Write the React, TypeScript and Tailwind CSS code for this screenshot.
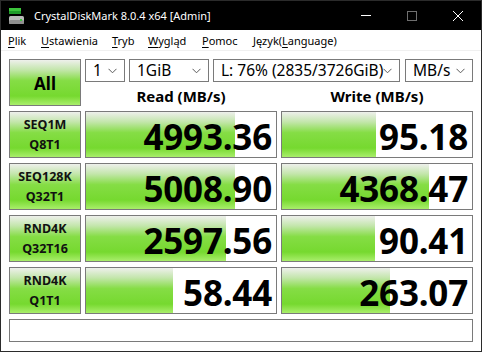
import React from 'react';

const green =
  'bg-[linear-gradient(to_bottom,#eef0ec_0%,#c3e6ab_22%,#85dd45_46%,#76d92f_80%,#a9ee6b_100%)]';

const Chevron: React.FC = () => (
  <svg width="9" height="6" viewBox="0 0 9 6" className="shrink-0">
    <polyline points="0.5,0.8 4.5,4.8 8.5,0.8" fill="none" stroke="#5a5a5a" strokeWidth="1" />
  </svg>
);

const Combo: React.FC<{ text: string; w: string }> = ({ text, w }) => (
  <div className={`${w} h-[23px] bg-white border border-[#7a7a7a] flex items-center justify-between pl-[7px] pr-[7px]`}>
    <span className="text-[15.5px] leading-[21px] text-black whitespace-nowrap">{text}</span>
    <Chevron />
  </div>
);

const Result: React.FC<{ value: string; bar: number }> = ({ value, bar }) => (
  <div className="relative h-[47px] border border-[#7a7a7a] bg-white overflow-hidden">
    <div className={`absolute left-0 top-0 bottom-0 ${green}`} style={{ width: `${bar}px` }} />
    <div className="relative h-full flex items-center justify-end pr-[4px] pt-[3px]">
      <span className="text-[35px] font-bold leading-none text-black tracking-[-0.2px]">{value}</span>
    </div>
  </div>
);

const rows = [
  { a: 'SEQ1M', b: 'Q8T1', read: '4993.36', rb: 149, write: '95.18', wb: 94 },
  { a: 'SEQ128K', b: 'Q32T1', read: '5008.90', rb: 149, write: '4368.47', wb: 147 },
  { a: 'RND4K', b: 'Q32T16', read: '2597.56', rb: 140, write: '90.41', wb: 93 },
  { a: 'RND4K', b: 'Q1T1', read: '58.44', rb: 87, write: '263.07', wb: 108 },
];

// menu item widths keep the starts where the original has them
const menu: { u: string; rest: string; pre?: string; w: string }[] = [
  { u: 'P', rest: 'lik', w: 'w-[33px]' },
  { u: 'U', rest: 'stawienia', w: 'w-[71px]' },
  { u: 'T', rest: 'ryb', w: 'w-[36px]' },
  { u: 'W', rest: 'ygląd', w: 'w-[54px]' },
  { u: 'P', rest: 'omoc', w: 'w-[51px]' },
  { pre: 'Język(', u: 'L', rest: 'anguage)', w: 'w-[100px]' },
];

const App: React.FC = () => {
  return (
    <div className="w-[482px] h-[352px] bg-white border border-[#2b2b2b] flex flex-col overflow-hidden font-['Noto_Sans',sans-serif]">
      {/* Title bar */}
      <div className="h-[29px] bg-black flex items-center shrink-0">
        <svg width="16" height="16" viewBox="0 0 16 16" className="ml-[8px]">
          <rect x="0" y="0" width="12" height="3" fill="#3cc43c" />
          <rect x="0" y="3" width="12" height="3" fill="#1f9a2a" />
          <rect x="0" y="8" width="15" height="8" rx="1.5" fill="#b9b9b9" />
          <rect x="0" y="12" width="15" height="4" rx="1.5" fill="#8f8f8f" />
          <rect x="11" y="11" width="2" height="2" fill="#3cc43c" />
        </svg>
        <span className="ml-[9px] text-white text-[11px] leading-none">CrystalDiskMark 8.0.4 x64 [Admin]</span>
        <div className="ml-auto flex h-full">
          <div className="w-[46px] h-full flex items-center justify-center">
            <div className="w-[10px] h-px bg-white" />
          </div>
          <div className="w-[46px] h-full flex items-center justify-center">
            <div className="w-[10px] h-[10px] border border-[#6f6f6f]" />
          </div>
          <div className="w-[46px] h-full flex items-center justify-center">
            <svg width="10" height="10" viewBox="0 0 10 10">
              <path d="M0 0 L10 10 M10 0 L0 10" stroke="#ffffff" strokeWidth="1" />
            </svg>
          </div>
        </div>
      </div>

      {/* Menu bar */}
      <div className="h-[21px] flex items-center pl-[7px] border-b border-[#f0f0f0] shrink-0">
        {menu.map((m, i) => (
          <span key={i} className={`${m.w} text-[11px] leading-none text-black whitespace-nowrap`}>
            {m.pre}
            <span className="underline underline-offset-[2px]">{m.u}</span>
            {m.rest}
          </span>
        ))}
      </div>

      {/* Content */}
      <div className="flex flex-col pl-[8px] pt-[8px]">
        <div className="flex gap-[4px]">
          <div className={`w-[72px] h-[47px] border border-[#7a7a7a] ${green} flex items-center justify-center`}>
            <span className="text-[17px] font-bold text-black leading-none mt-[2px]">All</span>
          </div>
          <div className="w-[388px] flex flex-col">
            <div className="flex">
              <Combo text="1" w="w-[40px]" />
              <div className="w-[4px]" />
              <Combo text="1GiB" w="w-[80px]" />
              <div className="w-[4px]" />
              <Combo text="L: 76% (2835/3726GiB)" w="w-[187px]" />
              <div className="w-[5px]" />
              <Combo text="MB/s" w="w-[68px]" />
            </div>
            <div className="grid grid-cols-2 gap-[4px] h-[24px]">
              <div className="text-center text-[15px] font-bold text-black leading-[18px] pt-[5px]">Read (MB/s)</div>
              <div className="text-center text-[15px] font-bold text-black leading-[18px] pt-[5px]">Write (MB/s)</div>
            </div>
          </div>
        </div>

        <div className="flex flex-col gap-[5px] mt-[5px]">
          {rows.map((r, i) => (
            <div key={i} className="grid grid-cols-[72px_192px_192px] gap-[4px]">
              <div className={`h-[47px] border border-[#7a7a7a] ${green} flex flex-col items-center justify-center`}>
                <span className="text-[12.5px] font-bold leading-[20px] text-[#111]">{r.a}</span>
                <span className="text-[12.5px] font-bold leading-[20px] text-[#111]">{r.b}</span>
              </div>
              <Result value={r.read} bar={r.rb} />
              <Result value={r.write} bar={r.wb} />
            </div>
          ))}
        </div>

        <div className="w-[464px] h-[23px] mt-[5px] border border-[#7a7a7a] bg-white" />
      </div>
    </div>
  );
};

export default App;
